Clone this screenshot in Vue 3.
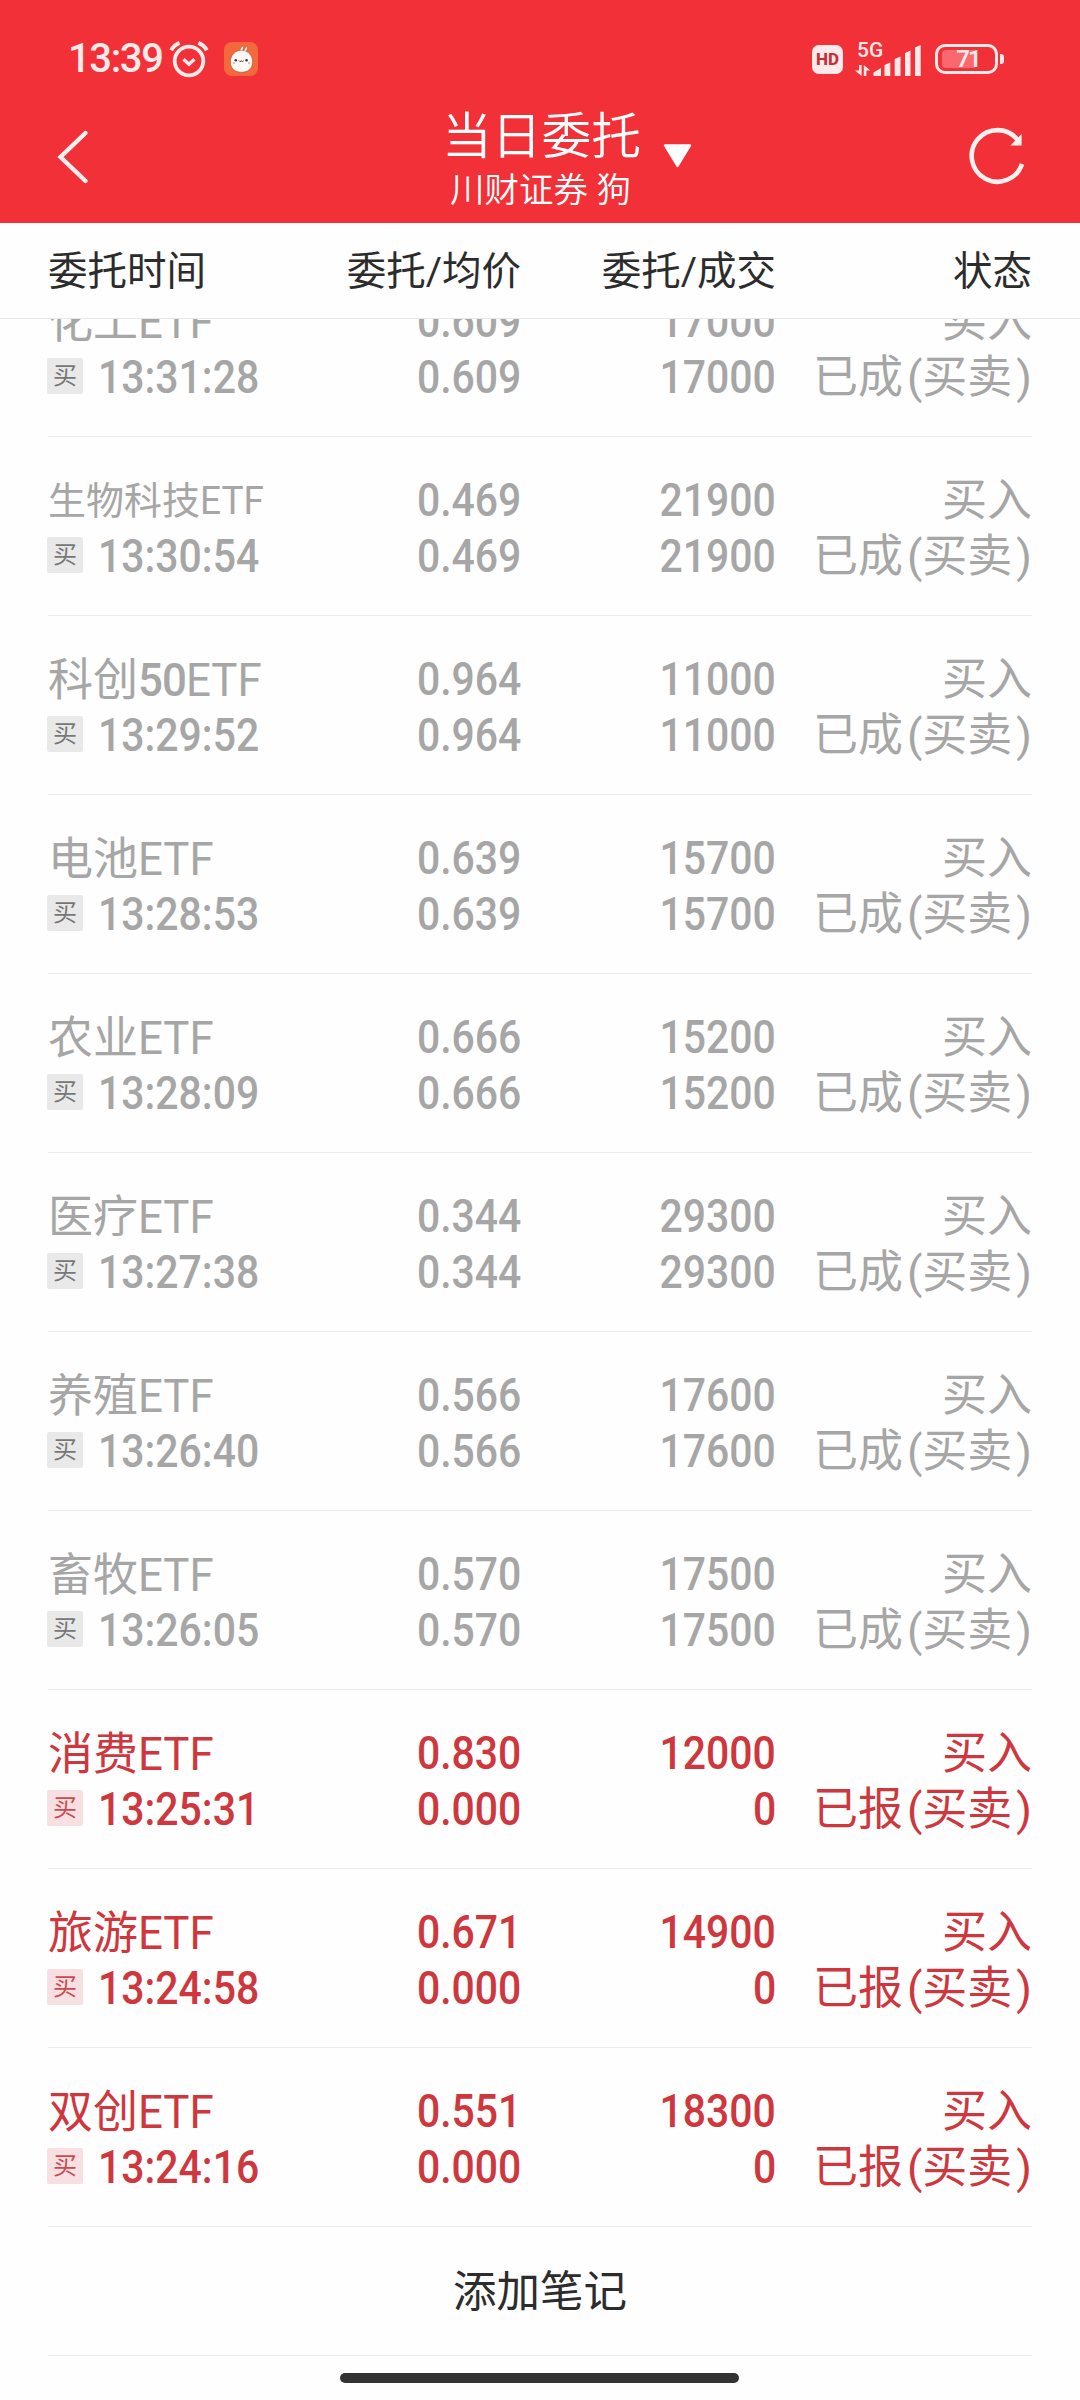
<template>
    <div class="page">
        <header class="top">
            <div class="status-bar">
                <span class="clock">13:39</span>
                <svg class="alarm" width="40" height="38" viewBox="0 0 40 38" fill="none" stroke="#ffe9e9">
                    <circle cx="20" cy="21" r="14.3" stroke-width="3.8" />
                    <path d="M14.5 19.2L20 24.2L25.5 19.2" stroke-width="3.4" />
                    <path d="M2.2 10.2Q5 5 10.6 2.8M37.8 10.2Q35 5 29.4 2.8" stroke-width="4" />
                </svg>
                <svg class="app-icon" width="34" height="34" viewBox="0 0 34 34">
                    <rect width="34" height="34" rx="8" fill="#f5683c" />
                    <g fill="#fffaf5" stroke="#8c4a20" stroke-width=".5">
                        <path d="M15 10L17.6 4.4Q19.4 3.4 19.4 5.4L18.4 10ZM19 10L22 4.6Q24 4 23.6 6L21.8 11Z" />
                        <path d="M17.5 8.3C24 8.3 28.6 13.6 28.6 20C28.6 26.4 24 30.2 17.5 30.2C11 30.2 6.4 26.4 6.4 20C6.4 13.6 11 8.3 17.5 8.3Z" />
                    </g>
                    <g fill="#3a3a3a">
                        <circle cx="11.8" cy="18.2" r="1.3" />
                        <circle cx="22.6" cy="18.2" r="1.3" />
                    </g>
                    <path d="M15 18.6Q16 20.6 17.2 18.8Q18.4 20.6 19.6 18.6" fill="none" stroke="#3a3a3a" stroke-width="1" />
                    <circle cx="10" cy="21" r=".9" fill="#f59a7c" />
                    <circle cx="25" cy="21" r=".9" fill="#f59a7c" />
                </svg>
                <span class="hd">HD</span>
                <div class="signal">
                    <span class="net">5G</span>
                    <svg width="66" height="36" viewBox="0 0 66 36" fill="#ffe9e9">
                        <path d="M4 24H6.6V35L0 29.5H4ZM8.8 35V24L15.4 29.5H11.4V35Z" />
                        <path d="M18.5 31.5L26 27V35H18.5ZM29.5 24L35.3 21.5V35H29.5ZM39.7 18L45.5 15.5V35H39.7ZM50 12L55.5 9.5V35H50ZM60 6.5L65.7 4V35H60Z" />
                    </svg>
                </div>
                <div class="battery">
                    <span class="level" :style="{ width: level * 0.49 + 'px' }"></span>
                    <span class="level-text">{{ level }}</span>
                </div>
                <span class="nub"></span>
            </div>
            <nav class="nav">
                <svg width="36" height="60" viewBox="0 0 36 60" fill="none" stroke="#fff0f0" stroke-width="4.4" stroke-linecap="round">
                    <path d="M31.5 6L6.5 30L31.5 54" stroke-linejoin="miter" />
                </svg>
                <div class="heading">
                    <div class="title">当日委托</div>
                    <div class="account">川财证券 狗</div>
                    <svg class="arrow" width="29" height="24" viewBox="0 0 29 24">
                        <path d="M2 1.5H27L14.5 22Z" fill="#fff" stroke="#fff" stroke-width="2.4" stroke-linejoin="round" />
                    </svg>
                </div>
                <svg width="60" height="60" viewBox="0 0 60 60">
                    <path d="M53 37A25.8 25.8 0 1 1 48.5 12.6" fill="none" stroke="#fff0f0" stroke-width="4.6" />
                    <path d="M52.6 7V18.6H41.5Z" fill="#fff0f0" />
                </svg>
            </nav>
        </header>

        <div class="columns">
            <span>委托时间</span>
            <span>委托/均价</span>
            <span>委托/成交</span>
            <span>状态</span>
        </div>

        <main class="list">
            <div class="scroll">
                <section v-for="o in orders" :key="o.time" class="order" :class="{ pending: o.pending }">
                    <div class="cell name-cell">
                        <div class="line cn" :class="{ small: o.name.length > 3 }">
                            {{ o.name }}<span class="latin"><b v-if="o.code">{{ o.code }}</b>ETF</span>
                        </div>
                        <div class="line time-line"><span class="badge">买</span><span class="num time">{{ o.time }}</span></div>
                    </div>
                    <div class="cell">
                        <div class="line"><span class="num">{{ o.price }}</span></div>
                        <div class="line"><span class="num">{{ o.avg }}</span></div>
                    </div>
                    <div class="cell">
                        <div class="line"><span class="num">{{ o.amount }}</span></div>
                        <div class="line"><span class="num">{{ o.filled }}</span></div>
                    </div>
                    <div class="cell">
                        <div class="line cn">买入</div>
                        <div class="line cn">{{ o.pending ? '已报' : '已成' }}<span class="paren">(</span>买卖<span class="paren">)</span></div>
                    </div>
                </section>
                <div class="note">添加笔记</div>
            </div>
        </main>

        <div class="home-bar"></div>
    </div>
</template>

<script setup>
import { ref } from 'vue';

const level = ref(71);

// 已成交的委托
const done = [
    ['化工', '', '13:31:28', '0.609', '17000'],
    ['生物科技', '', '13:30:54', '0.469', '21900'],
    ['科创', '50', '13:29:52', '0.964', '11000'],
    ['电池', '', '13:28:53', '0.639', '15700'],
    ['农业', '', '13:28:09', '0.666', '15200'],
    ['医疗', '', '13:27:38', '0.344', '29300'],
    ['养殖', '', '13:26:40', '0.566', '17600'],
    ['畜牧', '', '13:26:05', '0.570', '17500']
];

// 已报未成交的委托
const reported = [
    ['消费', '', '13:25:31', '0.830', '12000'],
    ['旅游', '', '13:24:58', '0.671', '14900'],
    ['双创', '', '13:24:16', '0.551', '18300']
];

function toOrder([name, code, time, price, amount], pending) {
    return {
        name,
        code,
        time,
        price,
        amount,
        avg: pending ? '0.000' : price,
        filled: pending ? '0' : amount,
        pending
    };
}

const orders = ref([
    ...done.map(row => toOrder(row, false)),
    ...reported.map(row => toOrder(row, true))
]);
</script>

<style>
body {
    background: #fefefe;
}
</style>

<style scoped>
.page {
    display: flex;
    flex-direction: column;
    width: 1080px;
    height: 2400px;
    overflow: hidden;
    background: #fefefe;
    font-family: Roboto, "Noto Sans CJK SC", sans-serif;
    color: #2c2c2c;
}

.top {
    height: 223px;
    background: #f23038;
    color: #fff;
}

.status-bar {
    display: flex;
    align-items: center;
    height: 38px;
    padding: 40px 76px 0 68px;
    color: #ffe9e9;
}

.clock {
    width: 96px;
    font-size: 40px;
    line-height: 38px;
    font-weight: 500;
    letter-spacing: -1.4px;
    white-space: nowrap;
}

.alarm {
    margin-left: 5px;
}

.app-icon {
    margin-left: 15px;
}

.hd {
    width: 31px;
    height: 29px;
    margin-left: auto;
    border-radius: 7px;
    background: #ffe9e9;
    color: #c2303a;
    font-size: 17px;
    line-height: 29px;
    font-weight: 800;
    text-align: center;
}

.signal {
    position: relative;
    height: 36px;
    margin-left: 12px;
}

.net {
    position: absolute;
    left: 2px;
    top: -2px;
    font-size: 21px;
    line-height: 22px;
    font-weight: 500;
}

.battery {
    position: relative;
    box-sizing: border-box;
    width: 63px;
    height: 30px;
    margin-left: 14px;
    border: 3px solid #ffe9e9;
    border-radius: 10px;
}

.level {
    position: absolute;
    left: 4px;
    top: 3px;
    bottom: 3px;
    border-radius: 4px;
    background: #f9686e;
}

.level-text {
    position: absolute;
    left: 3px;
    right: 0;
    line-height: 24px;
    font-size: 24px;
    font-weight: 600;
    letter-spacing: -2px;
    text-align: center;
}

.nub {
    width: 4px;
    height: 10px;
    margin-left: 2px;
    border-radius: 0 3px 3px 0;
    background: #ffe9e9;
}

.nav {
    display: flex;
    justify-content: space-between;
    padding: 49px 51px 0 54px;
}

.heading {
    position: relative;
    margin: -20px 0 0 24px;
    text-align: center;
    font-weight: 350;
}

.title {
    font-size: 49.8px;
    line-height: 60px;
}

.account {
    padding-right: 2px;
    font-size: 34.5px;
    line-height: 46px;
}

.arrow {
    position: absolute;
    left: 221px;
    top: 37px;
}

.columns {
    display: grid;
    grid-template-columns: 260px 213px 255px 1fr;
    box-sizing: border-box;
    height: 96px;
    padding: 2px 48px 0;
    border-bottom: 1px solid #e8e8e8;
    font-size: 39.5px;
    line-height: 93px;
    text-align: right;
}

.columns span:first-child {
    text-align: left;
}

.list {
    height: 2037px;
    overflow: hidden;
}

.scroll {
    margin: -61px 48px 0;
}

.order {
    display: grid;
    grid-template-columns: 260px 213px 255px 1fr;
    box-sizing: border-box;
    height: 179px;
    padding-top: 35px;
    border-bottom: 1px solid #ebebeb;
    color: #a6a6a6;
    font-size: 45px;
    line-height: 56px;
    text-align: right;
    white-space: nowrap;
}

.order.pending {
    color: #cd373d;
}

.name-cell {
    text-align: left;
}

.line {
    height: 56px;
}

/* 汉字比数字略低 */
.cn {
    line-height: 58px;
}

.small {
    font-size: 38px;
}

.num {
    display: inline-block;
    font-size: 46px;
    font-weight: 500;
    transform: scaleX(0.89);
    transform-origin: right;
}

.latin {
    display: inline-block;
    font-size: 1.02em;
    transform: scaleX(0.955);
    transform-origin: left;
}

.latin b {
    font-weight: 500;
    letter-spacing: -1px;
}

.time-line {
    display: flex;
    align-items: center;
}

.badge {
    width: 36px;
    height: 36px;
    margin: -2px 0 0 -1px;
    border-radius: 2px;
    background: #e9e9e9;
    color: #777;
    font-size: 24px;
    line-height: 36px;
    text-align: center;
}

.pending .badge {
    background: #f8e0e2;
    color: #cb4a50;
}

.time {
    margin-left: 15px;
    transform-origin: left;
}

.paren {
    margin-left: 4px;
}

.note {
    height: 126px;
    padding-top: 2px;
    border-bottom: 1px solid #ebebeb;
    font-size: 43.5px;
    line-height: 128px;
    text-align: center;
}

.home-bar {
    width: 399px;
    height: 10px;
    margin: 17px 0 0 340px;
    border-radius: 5px;
    background: #333;
}
</style>
